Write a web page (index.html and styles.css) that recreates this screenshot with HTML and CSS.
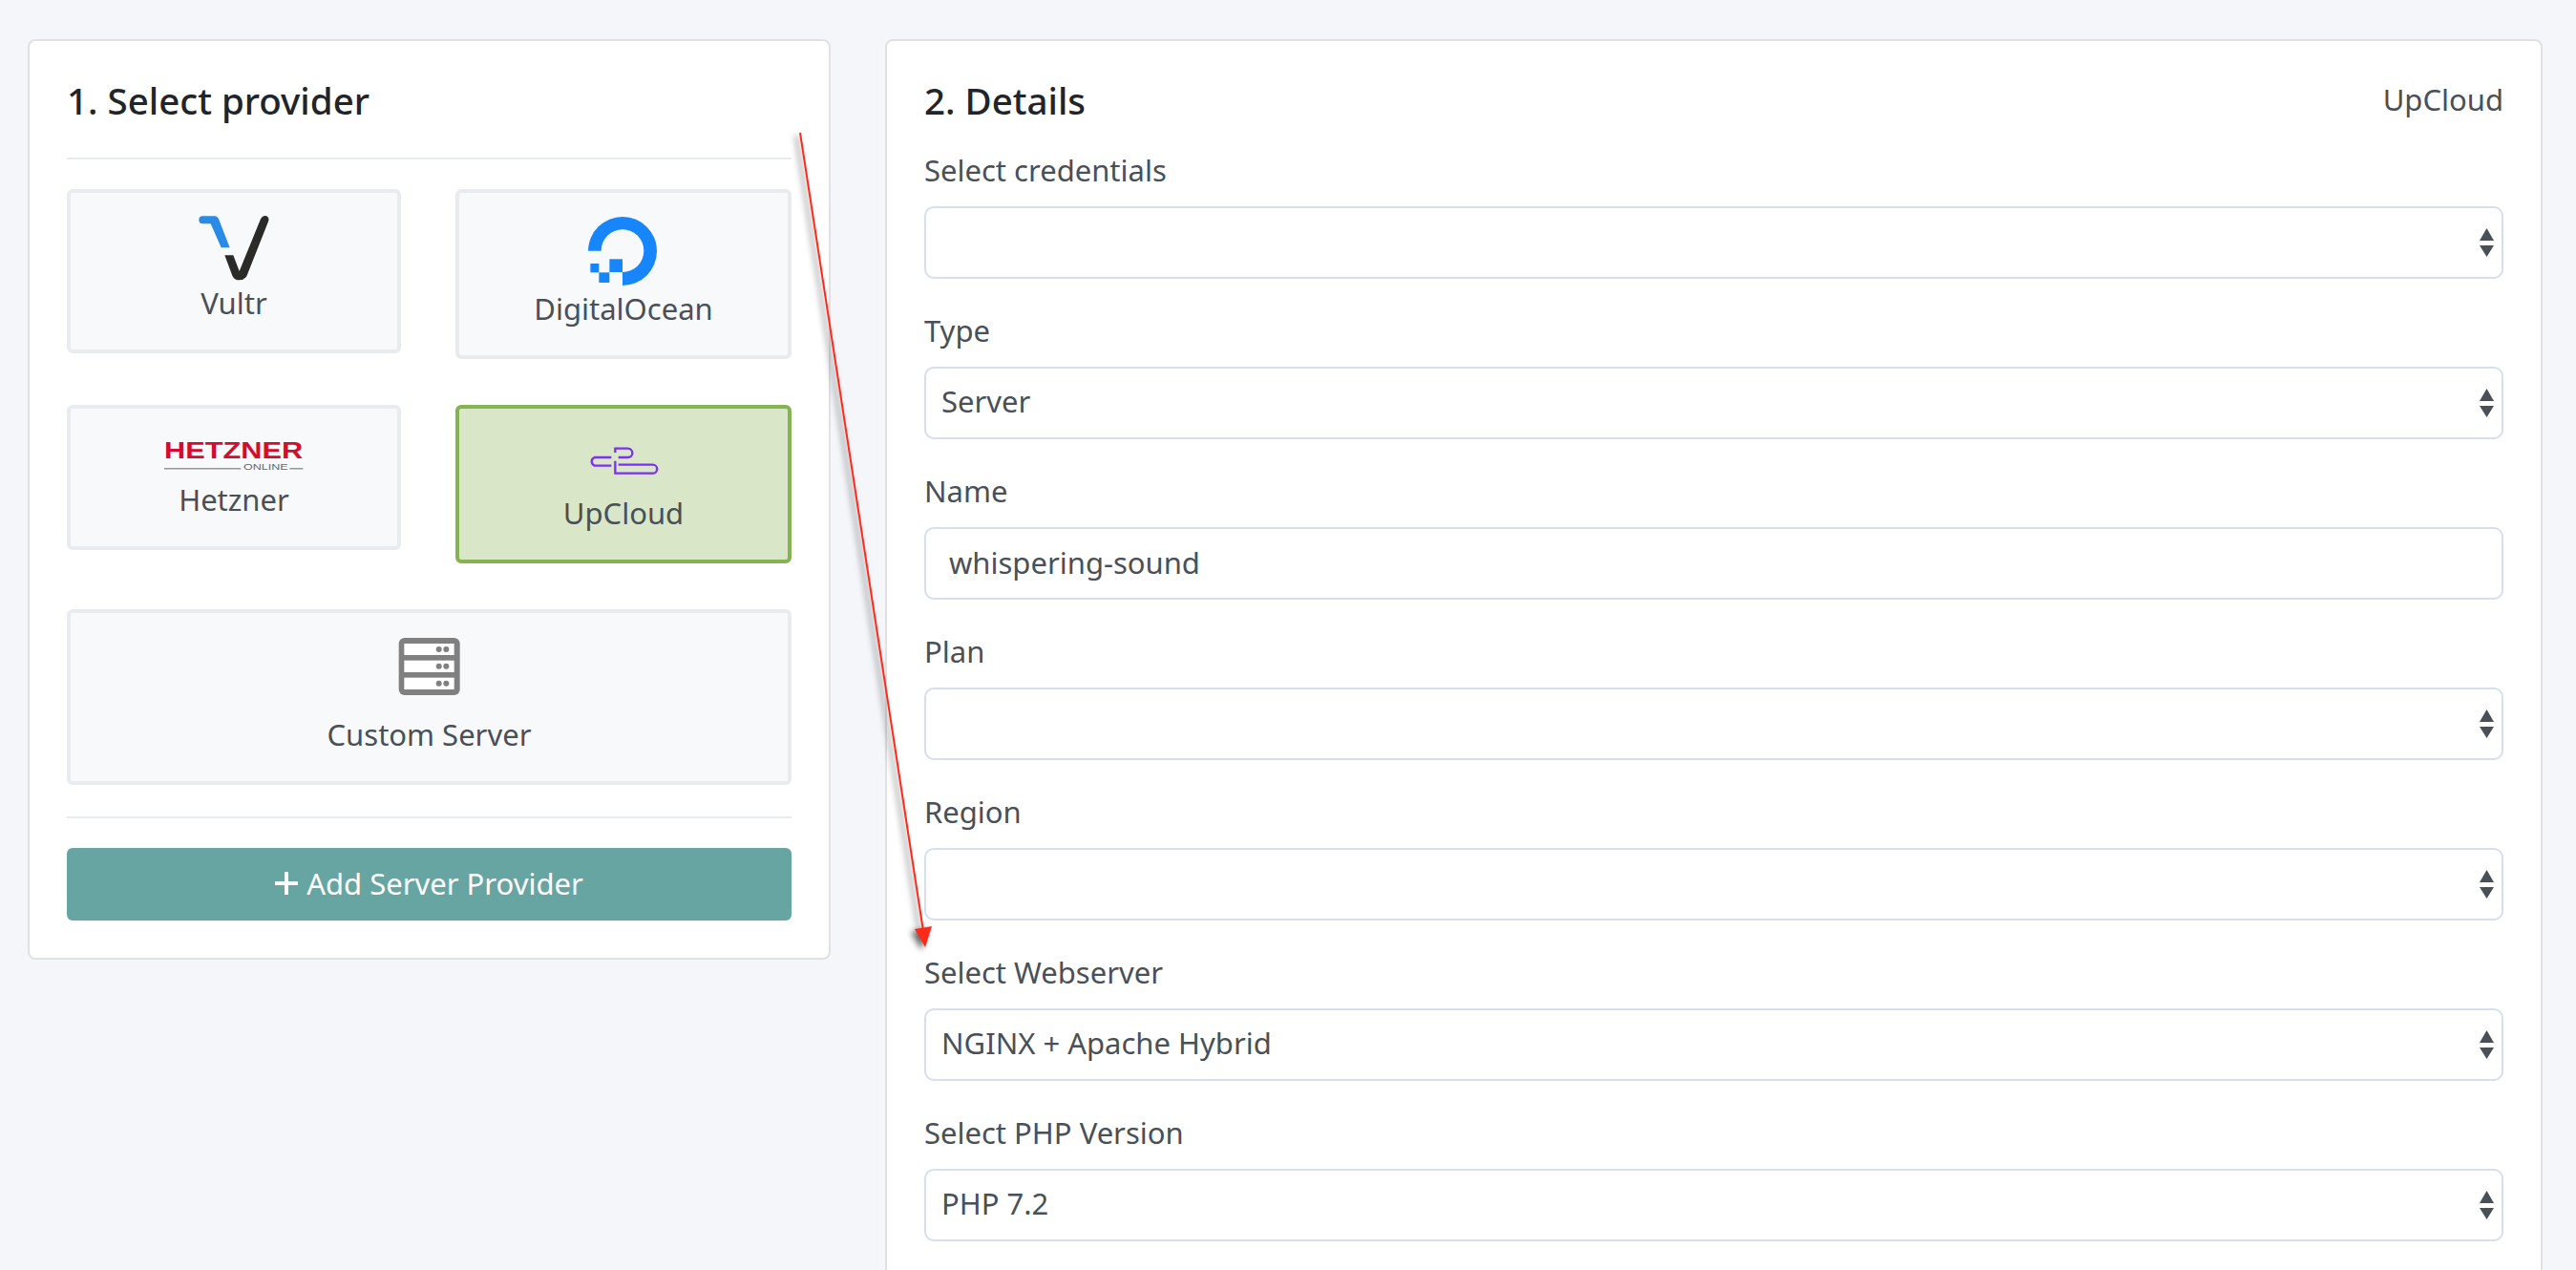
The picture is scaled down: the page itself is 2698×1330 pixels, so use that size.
FILE: index.html
```html
<html>
	<head>
		<title>New Server</title>
		<meta name="viewport" content="width=device-width, initial-scale=1.0">
		<link rel="stylesheet" href="styles.css">
	</head>
	<body>
		<div class="page">
			<div class="card card-left">
				<h2 class="title">1. Select provider</h2>
				<hr class="rule rule-top">
				<div class="providers">
					<div class="provider">
						<svg class="logo logo-vultr" viewBox="0 36 390 219">
							<path fill="#2a8be6" d="M97 49H135Q143 49 147 58L182 148H155L122 73H97A12 12 0 0 1 97 49Z"/>
							<path fill="#2a2a28" d="M166 172H193L212 222L279 58Q285 47 295 48Q308 52 303 66L235 238Q228 250 212 250Q196 250 190 236Z"/>
						</svg>
						<span>Vultr</span>
					</div>
					<div class="provider">
						<svg class="logo logo-do" viewBox="0 36 312 237">
							<path fill="#1786fd" d="M153 267V225A67 67 0 1 0 86 158H45A108 108 0 1 1 153 267Z"/>
							<rect fill="#1786fd" x="112" y="184" width="41" height="41"/>
							<rect fill="#1786fd" x="79" y="226" width="33" height="32"/>
							<rect fill="#1786fd" x="52" y="198" width="27" height="28"/>
						</svg>
						<span>DigitalOcean</span>
					</div>
					<div class="provider">
						<svg class="logo logo-hetzner" viewBox="15 -6 480 159">
							<text class="hetzner-word" x="36" y="90" textLength="436" lengthAdjust="spacingAndGlyphs">HETZNER</text>
							<text class="hetzner-sub" x="285" y="125" textLength="140" lengthAdjust="spacingAndGlyphs">ONLINE</text>
							<rect fill="#666" x="36" y="121" width="241" height="3"/>
							<rect fill="#666" x="430" y="121" width="42" height="3"/>
						</svg>
						<span>Hetzner</span>
					</div>
					<div class="provider active">
						<svg class="logo logo-upcloud" viewBox="0 -6 312 201">
							<path fill="none" stroke="#7b2ff7" stroke-width="7" d="M130 72V59H170A14 14 0 0 1 170 87H140M118 87H65A14 14 0 0 0 65 113H118M130 98V137H248A13 13 0 0 0 248 110H140"/>
						</svg>
						<span>UpCloud</span>
					</div>
					<div class="provider wide">
						<svg class="logo logo-custom" viewBox="-3 6 300 255">
							<rect fill="#808080" x="50" y="24" width="192" height="180" rx="18"/>
							<rect fill="#fff" x="67" y="42" width="157" height="36"/>
							<rect fill="#fff" x="67" y="95" width="157" height="37"/>
							<rect fill="#fff" x="67" y="149" width="157" height="37"/>
							<g fill="#808080">
								<circle cx="176" cy="60" r="9"/><circle cx="199" cy="60" r="9"/>
								<circle cx="176" cy="113" r="9"/><circle cx="199" cy="113" r="9"/>
								<circle cx="176" cy="167" r="9"/><circle cx="199" cy="167" r="9"/>
							</g>
						</svg>
						<span>Custom Server</span>
					</div>
				</div>
				<hr class="rule rule-bottom">
				<button class="add-btn">
					<svg class="plus" viewBox="0 0 24 24"><path stroke="#fff" stroke-width="4" d="M12 0V24M0 12H24"/></svg>
					Add Server Provider
				</button>
			</div>
			<div class="card card-right">
				<div class="details-head">
					<h2 class="title">2. Details</h2>
					<span class="chosen">UpCloud</span>
				</div>
				<div class="field">
					<label>Select credentials</label>
					<div class="select-wrap">
						<select><option></option></select>
						<svg class="caret" viewBox="0 0 15 30"><path d="M7.5 0L15 13H0ZM0 18H15L7.5 30Z"/></svg>
					</div>
				</div>
				<div class="field">
					<label>Type</label>
					<div class="select-wrap">
						<select><option>Server</option></select>
						<svg class="caret" viewBox="0 0 15 30"><path d="M7.5 0L15 13H0ZM0 18H15L7.5 30Z"/></svg>
					</div>
				</div>
				<div class="field">
					<label>Name</label>
					<input type="text" value="whispering-sound">
				</div>
				<div class="field">
					<label>Plan</label>
					<div class="select-wrap">
						<select><option></option></select>
						<svg class="caret" viewBox="0 0 15 30"><path d="M7.5 0L15 13H0ZM0 18H15L7.5 30Z"/></svg>
					</div>
				</div>
				<div class="field">
					<label>Region</label>
					<div class="select-wrap">
						<select><option></option></select>
						<svg class="caret" viewBox="0 0 15 30"><path d="M7.5 0L15 13H0ZM0 18H15L7.5 30Z"/></svg>
					</div>
				</div>
				<div class="field">
					<label>Select Webserver</label>
					<div class="select-wrap">
						<select><option>NGINX + Apache Hybrid</option></select>
						<svg class="caret" viewBox="0 0 15 30"><path d="M7.5 0L15 13H0ZM0 18H15L7.5 30Z"/></svg>
					</div>
				</div>
				<div class="field">
					<label>Select PHP Version</label>
					<div class="select-wrap">
						<select><option>PHP 7.2</option></select>
						<svg class="caret" viewBox="0 0 15 30"><path d="M7.5 0L15 13H0ZM0 18H15L7.5 30Z"/></svg>
					</div>
				</div>
			</div>
			<svg class="arrow" viewBox="0 0 2698 1330">
				<path stroke="#ff2a1a" stroke-width="2" d="M838 139L967 975"/>
				<path fill="#ff2a1a" d="M958 973L976 970L969 992Z"/>
			</svg>
		</div>
	</body>
</html>
```

FILE: styles.css
```css
html, body {
    margin: 0;
    height: 100%;
    background: #f4f6fa;
}
.page {
    position: relative;
    display: flex;
    align-items: flex-start;
    gap: 57px;
    height: 1330px;
    overflow: hidden;
    box-sizing: border-box;
    padding: 41px 35px 0 29px;
    font-family: "Noto Sans", "Lato", sans-serif;
    font-size: 31px;
    line-height: 45px;
    color: #495057;
}
.card {
    box-sizing: border-box;
    background: #fff;
    border: 2px solid #dfe1e3;
    border-radius: 8px;
    padding: 39px;
}
.card-left {
    width: 841px;
    flex: none;
}
.card-right {
    flex: 1;
}
.title {
    margin: 0;
    font-size: 38.5px;
    line-height: 46px;
    font-weight: 500;
    color: #212529;
}
.rule {
    margin: 0;
    border: none;
    height: 2px;
    background: #e9ecef;
}
.rule-top {
    margin-top: 37px;
    margin-bottom: 31px;
}
.rule-bottom {
    margin-top: 33px;
    margin-bottom: 31px;
}
.providers {
    display: grid;
    grid-template-columns: 350px 352px;
    justify-content: space-between;
    align-items: start;
    row-gap: 48px;
}
.provider {
    box-sizing: border-box;
    display: flex;
    flex-direction: column;
    align-items: center;
    background: #f8f9fa;
    border: 4px solid #e9ecef;
    border-radius: 6px;
    padding: 20px 0 26px;
}
.provider.wide {
    grid-column: 1 / 3;
}
.provider.active {
    background: #d9e7c8;
    border-color: #85b352;
}
.logo {
    display: block;
}
.logo-vultr {
    width: 130px;
    height: 73px;
}
.logo-do {
    width: 104px;
    height: 79px;
}
.logo-hetzner {
    width: 160px;
    height: 53px;
}
.logo-upcloud {
    width: 104px;
    height: 67px;
}
.logo-custom {
    width: 100px;
    height: 85px;
}
.hetzner-word {
    font-family: "Liberation Sans", sans-serif;
    font-weight: 700;
    font-size: 69px;
    fill: #d50c2d;
}
.hetzner-sub {
    font-family: "Liberation Sans", sans-serif;
    font-size: 25px;
    fill: #666;
}
.add-btn {
    display: flex;
    align-items: center;
    justify-content: center;
    gap: 9px;
    width: 100%;
    height: 76px;
    border: none;
    border-radius: 6px;
    padding: 0 0 2px;
    background: #67a5a3;
    color: #fff;
    font: inherit;
}
.plus {
    width: 24px;
    height: 24px;
}
.details-head {
    display: flex;
    justify-content: space-between;
    align-items: center;
    margin-bottom: 28px;
}
.chosen {
    margin-top: -2px;
}
.field {
    margin-bottom: 32px;
}
.field label {
    display: block;
    margin-bottom: 15px;
}
.select-wrap {
    position: relative;
}
select, input[type=text] {
    display: block;
    box-sizing: border-box;
    width: 100%;
    height: 76px;
    background: #fff;
    border: 2px solid #d6dfee;
    border-radius: 10px;
    font: inherit;
    color: #495057;
    outline: none;
}
select {
    appearance: none;
    padding: 0 40px 3px 16px;
}
input[type=text] {
    padding: 0 24px 3px;
}
.caret {
    position: absolute;
    top: 23px;
    right: 10px;
    width: 15px;
    height: 30px;
    fill: #495057;
}
.arrow {
    position: absolute;
    top: 0;
    left: 0;
    width: 2698px;
    height: 1330px;
    pointer-events: none;
    filter: drop-shadow(-4px 3px 3px rgba(0,0,0,0.6));
}
```
